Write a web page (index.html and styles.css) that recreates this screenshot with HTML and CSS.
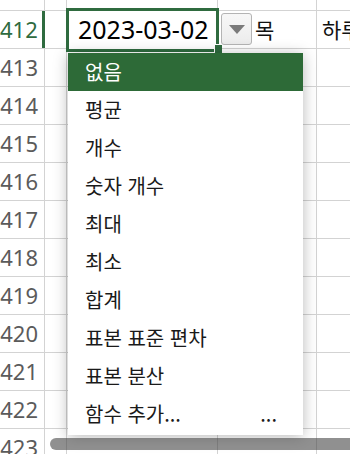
FILE: index.html
```html
<!DOCTYPE html>
<html lang="ko">
<head>
  <meta charset="UTF-8">
  <title>요약 행</title>
  <link rel="stylesheet" href="styles.css">
</head>
<body>

<div class="sheet">
  <div class="row top">
    <div class="head"></div><div class="c-a"></div><div class="c-b"></div><div class="c-c"></div><div class="c-d"></div>
  </div>
  <div class="row active">
    <div class="head">412</div><div class="c-a"></div><div class="c-b"></div><div class="c-c">목</div><div class="c-d">하루</div>
  </div>
  <div class="row"><div class="head">413</div><div class="c-a"></div><div class="c-b"></div><div class="c-c"></div><div class="c-d"></div></div>
  <div class="row"><div class="head">414</div><div class="c-a"></div><div class="c-b"></div><div class="c-c"></div><div class="c-d"></div></div>
  <div class="row"><div class="head">415</div><div class="c-a"></div><div class="c-b"></div><div class="c-c"></div><div class="c-d"></div></div>
  <div class="row"><div class="head">416</div><div class="c-a"></div><div class="c-b"></div><div class="c-c"></div><div class="c-d"></div></div>
  <div class="row"><div class="head">417</div><div class="c-a"></div><div class="c-b"></div><div class="c-c"></div><div class="c-d"></div></div>
  <div class="row"><div class="head">418</div><div class="c-a"></div><div class="c-b"></div><div class="c-c"></div><div class="c-d"></div></div>
  <div class="row"><div class="head">419</div><div class="c-a"></div><div class="c-b"></div><div class="c-c"></div><div class="c-d"></div></div>
  <div class="row"><div class="head">420</div><div class="c-a"></div><div class="c-b"></div><div class="c-c"></div><div class="c-d"></div></div>
  <div class="row"><div class="head">421</div><div class="c-a"></div><div class="c-b"></div><div class="c-c"></div><div class="c-d"></div></div>
  <div class="row"><div class="head">422</div><div class="c-a"></div><div class="c-b"></div><div class="c-c"></div><div class="c-d"></div></div>
  <div class="row"><div class="head">423</div><div class="c-a"></div><div class="c-b"></div><div class="c-c"></div><div class="c-d"></div></div>

  <div class="editor">2023-03-02</div>
  <div class="handle"></div>
  <div class="drop-btn">
    <svg width="16" height="9" viewBox="0 0 16 9"><polygon points="0,0 16,0 8,9" fill="#7a7a7a"/></svg>
  </div>

  <ul class="menu">
    <li class="sel">없음</li>
    <li>평균</li>
    <li>개수</li>
    <li>숫자 개수</li>
    <li>최대</li>
    <li>최소</li>
    <li>합계</li>
    <li>표본 표준 편차</li>
    <li>표본 분산</li>
    <li class="more"><span>함수 추가...</span><span>...</span></li>
  </ul>

  <div class="hscroll"></div>
</div>

</body>
</html>
```

FILE: styles.css
```css
body {
  margin: 0;
  background: #fff;
  font-family: "Noto Sans", "Noto Sans CJK KR", sans-serif;
  overflow: hidden;
}
.sheet {
  position: relative;
  width: 350px;
  height: 454px;
  overflow: hidden;
}
.row {
  display: flex;
  height: 37px;
  border-bottom: 1px solid #d3d3d3;
}
.row.top {
  height: 10px;
}
.row > div {
  box-sizing: border-box;
  border-right: 1px solid #d3d3d3;
  height: 100%;
  white-space: nowrap;
  overflow: hidden;
}
.head {
  width: 45px;
  flex: none;
  text-align: right;
  padding-right: 6px;
  font-size: 22px;
  line-height: 37px;
  color: #5b5b5b;
}
.active .head {
  color: #2f6b3f;
  border-right: 3px solid #2f6b3f !important;
}
.c-a { width: 22px; flex: none; }
.c-b { width: 151px; flex: none; }
.c-c {
  width: 99px;
  flex: none;
  padding-left: 37px;
  font-family: "Noto Sans CJK KR", sans-serif;
  font-size: 21px;
  line-height: 37px;
  color: #111;
}
.c-d {
  flex: 1;
  padding-left: 5px;
  font-family: "Noto Sans CJK KR", sans-serif;
  font-size: 21px;
  line-height: 37px;
  color: #111;
  border-right: none !important;
}

.editor {
  position: absolute;
  left: 66px;
  top: 8px;
  width: 153px;
  height: 44px;
  box-sizing: border-box;
  border: 3px solid #2f6b3f;
  background: #fff;
  padding-left: 9px;
  font-size: 25px;
  line-height: 37px;
  color: #000;
}
.handle {
  position: absolute;
  left: 214px;
  top: 44px;
  width: 7px;
  height: 8px;
  background: #2f6b3f;
  border-left: 1px solid #fff;
  border-top: 1px solid #fff;
}
.drop-btn {
  position: absolute;
  left: 221px;
  top: 13px;
  width: 31px;
  height: 32px;
  box-sizing: border-box;
  border: 1px solid #b4b4b4;
  border-radius: 3px;
  background: linear-gradient(#f7f7f7, #ececec);
  display: flex;
  align-items: center;
  justify-content: center;
}

.menu {
  position: absolute;
  left: 68px;
  top: 53px;
  width: 235px;
  margin: 0;
  padding: 0 0 2px;
  list-style: none;
  background: #fff;
  box-shadow: 0 2px 14px rgba(0,0,0,0.28);
  font-family: "Noto Sans CJK KR", sans-serif;
  font-size: 20px;
  color: #1a1a1a;
}
.menu li {
  height: 38px;
  line-height: 38px;
  padding: 0 26px 0 17px;
}
.menu li.sel {
  background: #2d6a37;
  color: #fff;
}
.menu li.more {
  display: flex;
  justify-content: space-between;
}

.hscroll {
  position: absolute;
  left: 50px;
  right: 0;
  top: 438px;
  height: 12px;
  border-radius: 6px 0 0 6px;
  background: rgba(70,70,70,0.6);
}
```
